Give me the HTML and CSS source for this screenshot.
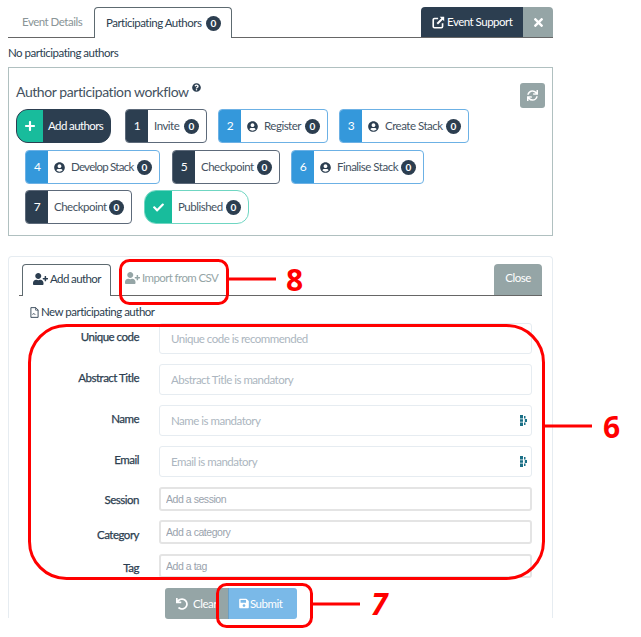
FILE: index.html
```html
<!DOCTYPE html>
<html lang="en">
<head>
<meta charset="utf-8">
<title>Participating Authors</title>
<link rel="stylesheet" href="styles.css">
</head>
<body>
<svg class="defs" width="0" height="0" aria-hidden="true">
  <symbol id="i-user" viewBox="0 0 496 512"><path d="M248 8C111 8 0 119 0 256s111 248 248 248 248-111 248-248S385 8 248 8zm0 96c48.6 0 88 39.4 88 88s-39.4 88-88 88-88-39.4-88-88 39.4-88 88-88zm0 344c-58.7 0-111.3-26.6-146.5-68.2 18.8-35.4 55.6-59.8 98.5-59.8 2.4 0 4.8.4 7.1 1.1 13 4.2 26.6 6.9 40.9 6.9 14.3 0 28-2.7 40.9-6.9 2.3-.7 4.7-1.1 7.1-1.1 42.9 0 79.7 24.4 98.5 59.8C359.3 421.4 306.7 448 248 448z"/></symbol>
  <symbol id="i-check" viewBox="0 0 512 512"><path d="M173.898 439.404l-166.4-166.4c-9.997-9.997-9.997-26.206 0-36.204l36.203-36.204c9.997-9.998 26.207-9.998 36.204 0L192 312.69 432.095 72.596c9.997-9.997 26.207-9.997 36.204 0l36.203 36.204c9.997 9.997 9.997 26.206 0 36.204l-294.4 294.401c-9.998 9.997-26.207 9.997-36.204-.001z"/></symbol>
  <symbol id="i-times" viewBox="0 0 352 512"><path d="M242.72 256l100.07-100.07c12.28-12.28 12.28-32.19 0-44.48l-22.24-22.24c-12.28-12.28-32.19-12.28-44.48 0L176 189.28 75.93 89.21c-12.28-12.28-32.19-12.28-44.48 0L9.21 111.45c-12.28 12.28-12.28 32.19 0 44.48L109.28 256 9.21 356.07c-12.28 12.28-12.28 32.19 0 44.48l22.24 22.24c12.28 12.28 32.2 12.28 44.48 0L176 322.72l100.07 100.07c12.28 12.28 32.2 12.28 44.48 0l22.24-22.24c12.28-12.28 12.28-32.19 0-44.48L242.72 256z"/></symbol>
  <symbol id="i-plus" viewBox="0 0 448 512"><path d="M416 208H272V64c0-17.67-14.33-32-32-32h-32c-17.67 0-32 14.33-32 32v144H32c-17.67 0-32 14.33-32 32v32c0 17.67 14.33 32 32 32h144v144c0 17.67 14.33 32 32 32h32c17.67 0 32-14.33 32-32V304h144c17.67 0 32-14.33 32-32v-32c0-17.67-14.33-32-32-32z"/></symbol>
  <symbol id="i-userplus" viewBox="0 0 640 512"><path d="M624 208h-64v-64c0-8.8-7.2-16-16-16h-32c-8.8 0-16 7.2-16 16v64h-64c-8.8 0-16 7.2-16 16v32c0 8.8 7.2 16 16 16h64v64c0 8.8 7.2 16 16 16h32c8.8 0 16-7.2 16-16v-64h64c8.8 0 16-7.2 16-16v-32c0-8.8-7.2-16-16-16zm-400 48c70.7 0 128-57.3 128-128S294.7 0 224 0 96 57.3 96 128s57.3 128 128 128zm89.6 32h-16.7c-22.2 10.2-46.9 16-72.9 16s-50.6-5.8-72.9-16h-16.7C60.2 288 0 348.2 0 422.4V464c0 26.5 21.5 48 48 48h352c26.5 0 48-21.5 48-48v-41.6c0-74.2-60.2-134.4-134.4-134.4z"/></symbol>
  <symbol id="i-sync" viewBox="0 0 512 512"><path d="M440.65 12.57l4 82.77A247.16 247.16 0 0 0 255.83 8C134.73 8 33.91 94.92 12.29 209.82A12 12 0 0 0 24.09 224h49.05a12 12 0 0 0 11.67-9.26 175.91 175.91 0 0 1 317-56.94l-101.46-4.86a12 12 0 0 0-12.57 12v47.41a12 12 0 0 0 12 12H500a12 12 0 0 0 12-12V12a12 12 0 0 0-12-12h-47.37a12 12 0 0 0-11.98 12.57zM255.83 432a175.61 175.61 0 0 1-146-77.8l101.8 4.87a12 12 0 0 0 12.57-12v-47.4a12 12 0 0 0-12-12H12a12 12 0 0 0-12 12V500a12 12 0 0 0 12 12h47.35a12 12 0 0 0 12-12.6l-4.15-82.57A247.17 247.17 0 0 0 255.83 504c121.11 0 221.93-86.92 243.55-201.82a12 12 0 0 0-11.8-14.18h-49.05a12 12 0 0 0-11.67 9.26A175.86 175.86 0 0 1 255.83 432z"/></symbol>
  <symbol id="i-save" viewBox="0 0 448 512"><path d="M433.941 129.941l-83.882-83.882A48 48 0 0 0 316.118 32H48C21.49 32 0 53.49 0 80v352c0 26.51 21.49 48 48 48h352c26.51 0 48-21.49 48-48V163.882a48 48 0 0 0-14.059-33.941zM224 416c-35.346 0-64-28.654-64-64 0-35.346 28.654-64 64-64s64 28.654 64 64c0 35.346-28.654 64-64 64zm96-304.52V212c0 6.627-5.373 12-12 12H76c-6.627 0-12-5.373-12-12V108c0-6.627 5.373-12 12-12h228.52c3.183 0 6.235 1.264 8.485 3.515l3.48 3.48A11.996 11.996 0 0 1 320 111.48z"/></symbol>
  <symbol id="i-undo" viewBox="0 0 512 512"><path d="M212.333 224.333H12c-6.627 0-12-5.373-12-12V12C0 5.373 5.373 0 12 0h48c6.627 0 12 5.373 12 12v78.112C117.773 39.279 184.26 7.47 258.175 8.007c136.906.994 246.448 111.623 246.157 248.532C504.041 393.258 393.12 504 256.333 504c-64.089 0-122.496-24.313-166.51-64.215-5.099-4.622-5.334-12.554-.467-17.42l33.967-33.967c4.474-4.474 11.662-4.717 16.401-.525C170.76 415.336 211.58 432 256.333 432c97.268 0 176-78.716 176-176 0-97.267-78.716-176-176-176-58.496 0-110.28 28.476-142.274 72.333h98.274c6.627 0 12 5.373 12 12v48c0 6.627-5.373 12-12 12z"/></symbol>
  <symbol id="i-help" viewBox="0 0 512 512"><path d="M504 256c0 136.997-111.043 248-248 248S8 392.997 8 256C8 119.083 119.043 8 256 8s248 111.083 248 248zM262.655 90c-54.497 0-89.255 22.957-116.549 63.758-3.536 5.286-2.353 12.415 2.715 16.258l34.699 26.31c5.205 3.947 12.621 3.008 16.665-2.122 17.864-22.658 30.113-35.797 57.303-35.797 20.429 0 45.698 13.148 45.698 32.958 0 14.976-12.363 22.667-32.534 33.976C247.128 238.528 216 254.941 216 296v4c0 6.627 5.373 12 12 12h56c6.627 0 12-5.373 12-12v-1.333c0-28.462 83.186-29.647 83.186-106.667 0-58.002-60.165-102-116.531-102zM256 338c-25.365 0-46 20.635-46 46 0 25.364 20.635 46 46 46s46-20.636 46-46c0-25.365-20.635-46-46-46z"/></symbol>
  <symbol id="i-ext" viewBox="0 0 16 16"><path d="M7.500 3H3a1.500 1.500 0 0 0-1.500 1.500v8.500A1.500 1.500 0 0 0 3 14.500h8.500A1.500 1.500 0 0 0 13 13V9" fill="none" stroke="currentColor" stroke-width="2"/><path d="M6.500 9.500 13 3" fill="none" stroke="currentColor" stroke-width="2.400"/><path d="M9.500 1h5.500v5.500z"/></symbol>
  <symbol id="i-file" viewBox="0 0 10 12"><path d="M1 .6h5.400L9 3.200v8.200H1z" fill="none" stroke="currentColor"/><path d="M6.200.6v2.800H9M2.800 8.500l1-1.500.8 1.200.8-.8.8.8" fill="none" stroke="currentColor" stroke-width=".8"/></symbol>
  <symbol id="i-pm" viewBox="0 0 7 11"><path d="M0 0h3v3.500H0zM0 4.200h3v2.600H0zM0 7.500h3V11H0zM4 1h1.500v2.500H4zM4.800 4H7v3H4.800zM4 7.500h1.500V10H4z"/></symbol>
</svg>

<main class="page">
  <nav class="tabs">
    <a class="tab">Event Details</a>
    <a class="tab tab-active">Participating Authors <span class="badge">0</span></a>
    <div class="tabs-actions">
      <a class="btn-support"><svg class="ico-ext"><use href="#i-ext"/></svg>Event Support</a>
      <a class="btn-x"><svg class="ico-x"><use href="#i-times"/></svg></a>
    </div>
  </nav>

  <p class="status">No participating authors</p>

  <section class="workflow">
    <div class="wf-head">
      <h2 class="wf-title">Author participation workflow<svg class="ico-help"><use href="#i-help"/></svg></h2>
      <a class="btn-refresh"><svg class="ico-sync"><use href="#i-sync"/></svg></a>
    </div>
    <div class="wf-row">
      <a class="step step-add"><span class="step-num"><svg class="ico-plus"><use href="#i-plus"/></svg></span><span class="step-label">Add authors</span></a>
      <a class="step step-dark s-invite"><span class="step-num">1</span><span class="step-label">Invite <span class="badge">0</span></span></a>
      <a class="step step-blue s-register"><span class="step-num">2</span><span class="step-label"><svg class="ico-user"><use href="#i-user"/></svg>Register <span class="badge">0</span></span></a>
      <a class="step step-blue s-create"><span class="step-num">3</span><span class="step-label"><svg class="ico-user"><use href="#i-user"/></svg>Create Stack <span class="badge">0</span></span></a>
    </div>
    <div class="wf-row wf-indent wf-mid">
      <a class="step step-blue s-develop"><span class="step-num">4</span><span class="step-label"><svg class="ico-user"><use href="#i-user"/></svg>Develop Stack <span class="badge">0</span></span></a>
      <a class="step step-dark s-check5"><span class="step-num">5</span><span class="step-label">Checkpoint <span class="badge">0</span></span></a>
      <a class="step step-blue s-finalise"><span class="step-num">6</span><span class="step-label"><svg class="ico-user"><use href="#i-user"/></svg>Finalise Stack <span class="badge">0</span></span></a>
    </div>
    <div class="wf-row wf-indent">
      <a class="step step-dark s-check7"><span class="step-num">7</span><span class="step-label">Checkpoint <span class="badge">0</span></span></a>
      <a class="step step-done"><span class="step-num"><svg class="ico-check"><use href="#i-check"/></svg></span><span class="step-label">Published <span class="badge">0</span></span></a>
    </div>
  </section>

  <section class="panel">
    <nav class="subtabs">
      <a class="subtab subtab-active"><svg class="ico-up"><use href="#i-userplus"/></svg>Add author</a>
      <a class="subtab"><svg class="ico-up"><use href="#i-userplus"/></svg>Import from CSV</a>
      <a class="btn-close">Close</a>
    </nav>
    <h3 class="form-title"><svg class="ico-file"><use href="#i-file"/></svg>New participating author</h3>
    <form class="form">
      <label class="lbl lbl-a">Unique code</label><div class="field"><input class="input" placeholder="Unique code is recommended"></div>
      <label class="lbl lbl-a">Abstract Title</label><div class="field"><input class="input" placeholder="Abstract Title is mandatory"></div>
      <label class="lbl lbl-a">Name</label><div class="field"><input class="input" placeholder="Name is mandatory"><svg class="ico-pm"><use href="#i-pm"/></svg></div>
      <label class="lbl lbl-a">Email</label><div class="field"><input class="input" placeholder="Email is mandatory"><svg class="ico-pm"><use href="#i-pm"/></svg></div>
      <label class="lbl lbl-b">Session</label><div class="field field-tight"><input class="tag-input" placeholder="Add a session"></div>
      <label class="lbl lbl-c">Category</label><div class="field"><input class="tag-input" placeholder="Add a category"></div>
      <label class="lbl lbl-a">Tag</label><div class="field"><input class="tag-input" placeholder="Add a tag"></div>
    </form>
    <div class="form-actions">
      <a class="btn-clear"><svg class="ico-undo"><use href="#i-undo"/></svg>Clear</a>
      <a class="btn-submit"><svg class="ico-save"><use href="#i-save"/></svg>Submit</a>
    </div>
  </section>
</main>

<svg class="notes" width="641" height="637" viewBox="0 0 641 637">
  <g fill="none" stroke="#f00" stroke-width="3">
    <rect x="120.500" y="260.500" width="107" height="43" rx="9"/>
    <path d="M228 279h48"/>
    <rect x="29.500" y="325.500" width="514" height="253" rx="37"/>
    <path d="M545 426h47"/>
    <rect x="217.500" y="584.500" width="94" height="42" rx="9"/>
    <path d="M312 604h48"/>
  </g>
  <text class="note-num" x="286" y="291">8</text>
  <text class="note-num" x="603" y="438">6</text>
  <text class="note-num note-it" x="371" y="615">7</text>
</svg>
</body>
</html>
```

FILE: styles.css
```css
* { box-sizing: border-box; }
html, body { margin: 0; padding: 0; }
body {
  width: 641px;
  height: 637px;
  overflow: hidden;
  position: relative;
  background: #fff;
  color: #2c3e50;
  font-family: Lato, "Liberation Sans", sans-serif;
  font-size: 11.500px;
  letter-spacing: -.5px;
  line-height: 16px;
}
svg { fill: currentColor; }
.defs { position: absolute; }
.page { width: 545px; margin-left: 8px; padding-top: 7px; }

.badge {
  display: inline-block;
  min-width: 15px;
  height: 15px;
  padding: 0 4px;
  margin-left: 2px;
  border-radius: 8px;
  background: #2c3e50;
  color: #fff;
  font-size: 10px;
  font-weight: 700;
  letter-spacing: 0;
  line-height: 15px;
  text-align: center;
}

.tabs {
  display: flex;
  height: 31px;
  border-bottom: 1px solid #666;
}
.tab {
  width: 86px;
  height: 31px;
  padding: 7px 0 0 14px;
  color: #8a9597;
  white-space: nowrap;
}
.tab-active {
  width: 138px;
  color: #2c3e50;
  background: #fff;
  border: 1px solid #5d6a70;
  border-bottom: 0;
  border-radius: 4px 4px 0 0;
  padding: 7px 0 0 11px;
}
.tabs-actions { display: flex; margin-left: auto; height: 30px; }
.btn-support {
  display: flex;
  align-items: center;
  width: 102px;
  padding-left: 11px;
  background: #2c3e50;
  color: #fff;
  border-radius: 4px 0 0 0;
  white-space: nowrap;
}
.ico-ext { width: 13px; height: 13px; margin-right: 2px; }
.btn-x {
  display: flex;
  align-items: center;
  justify-content: center;
  width: 30px;
  background: #95a5a6;
  color: #fff;
  border-radius: 0 4px 0 0;
}
.ico-x { width: 9px; height: 13px; }

.status { margin: 7px 0 0; height: 22px; }

.workflow {
  height: 169px;
  width: 545px;
  border: 1px solid #b0c0c0;
  padding: 14px 7px 0;
}
.wf-head { display: flex; justify-content: space-between; height: 27px; }
.wf-title {
  margin: 0;
  padding-top: 1px;
  font-size: 14px;
  font-weight: 400;
  letter-spacing: -.42px;
  line-height: 18px;
  color: #44525f;
}
.ico-help { width: 9px; height: 9px; margin-left: 3px; vertical-align: 5px; color: #2c3e50; }
.btn-refresh {
  display: flex;
  align-items: center;
  justify-content: center;
  width: 25px;
  height: 25px;
  margin: 1px 0 0;
  background: #95a5a6;
  color: #fff;
  border-radius: 3px;
}
.ico-sync { width: 11px; height: 11px; }

.wf-row { display: flex; gap: 11px; height: 34px; margin-bottom: 7px; }
.wf-mid { margin-bottom: 6px; }
.wf-indent { padding-left: 9px; }

.step {
  display: flex;
  height: 34px;
  overflow: hidden;
  border: 1px solid;
  border-radius: 4px;
  white-space: nowrap;
  color: #44525f;
}
.step-num {
  display: flex;
  align-items: center;
  justify-content: center;
  flex: none;
  width: 22px;
  color: #fff;
  font-size: 12px;
}
.step-label { display: flex; flex: 1; align-items: center; gap: 2px; padding: 0 7px 0 6px; }
.step-label .badge { margin-left: auto; }
.step-dark { border-color: #5d6a7a; }
.step-dark .step-num { background: #2c3e50; }
.step-blue { border-color: #6cb1e5; }
.step-blue .step-num { background: #3498db; }
.ico-user { flex: none; width: 11px; height: 11px; margin-right: 4px; color: #2c3e50; }

.s-invite { width: 82px; margin-left: 3px; }
.s-register { width: 110px; }
.s-create { width: 130px; }
.s-develop { width: 135px; letter-spacing: -.75px; }
.s-check5 { width: 108px; margin-left: 1px; }
.s-finalise { width: 133px; }
.s-check7 { width: 107px; }

.step-add {
  width: 95px;
  background: #2c3e50;
  border-color: #2c3e50;
  border-radius: 12px;
  color: #fff;
}
.step-add .step-num { width: 26px; background: #18bc9c; }
.step-add .step-label { padding: 0 0 0 5px; letter-spacing: -.6px; }
.ico-plus { width: 10px; height: 12px; }

.step-done { width: 105px; margin-left: 1px; border-color: #6fd6c2; border-radius: 12px; }
.step-done .step-num { width: 27px; background: #18bc9c; }
.ico-check { width: 11px; height: 11px; }

.panel {
  width: 545px;
  height: 362px;
  margin-top: 20px;
  padding: 7px 10px 0;
  border: 1px solid #e6ecf1;
  border-bottom: 0;
  border-radius: 4px 4px 0 0;
}
.subtabs {
  display: flex;
  height: 32px;
  border-bottom: 1px solid #666;
}
.subtab {
  display: flex;
  align-items: center;
  height: 31px;
  padding: 0 0 3px 10px;
  margin-left: 3px;
  color: #95a5a6;
  letter-spacing: -.6px;
  white-space: nowrap;
}
.subtab-active {
  width: 89px;
  height: 32px;
  color: #2c3e50;
  background: #fff;
  border: 1px solid #5d6a70;
  border-bottom: 0;
  border-radius: 4px 4px 0 0;
  margin-right: 1px;
}
.ico-up { flex: none; width: 15px; height: 12px; margin-right: 2px; }
.btn-close {
  display: flex;
  align-items: center;
  justify-content: center;
  width: 48px;
  height: 31px;
  padding-bottom: 3px;
  margin-left: auto;
  background: #95a5a6;
  color: #fff;
  border-radius: 4px 4px 0 0;
}

.form-title {
  display: flex;
  align-items: center;
  margin: 8px 0 0 10px;
  height: 16px;
  font-size: 11.500px;
  font-weight: 400;
}
.ico-file { width: 9px; height: 11px; margin: 0 2px 0 1px; }

.form {
  display: grid;
  grid-template-columns: 120px 373px;
  column-gap: 20px;
  margin-top: 3px;
}
.lbl {
  text-align: right;
  letter-spacing: -.5px;
  line-height: 16px;
  -webkit-text-stroke: .25px #2c3e50;
}
.lbl-a { padding-top: 6px; }
.lbl-b { padding-top: 5px; }
.lbl-c { padding-top: 7px; }
.field { position: relative; margin-bottom: 10px; }
.field-tight { margin-bottom: 9px; }
.input {
  display: block;
  width: 100%;
  height: 31px;
  padding: 0 11px;
  border: 1px solid #e6ecf1;
  border-radius: 3px;
  background: #fff;
  font: 11.500px Lato, "Liberation Sans", sans-serif;
  letter-spacing: -.5px;
  color: #2c3e50;
  outline: 0;
}
.input::placeholder { color: #acb6c0; opacity: 1; }
.tag-input {
  display: block;
  width: 100%;
  height: 24px;
  padding: 0 5px;
  border: 2px solid #e4e4e4;
  border-radius: 3px;
  background: #fff;
  font: 10.500px "Liberation Sans", Arial, sans-serif;
  letter-spacing: -.45px;
  outline: 0;
}
.tag-input::placeholder { color: #9aa3ad; opacity: 1; }
.ico-pm {
  position: absolute;
  top: 10px;
  right: 5px;
  width: 7px;
  height: 11px;
  color: #1a6f86;
}

.form-actions { display: flex; margin-left: 146px; }
.btn-clear, .btn-submit {
  display: flex;
  align-items: center;
  height: 31px;
  color: #fff;
  white-space: nowrap;
}
.btn-clear {
  width: 63px;
  padding-left: 11px;
  background: #95a5a6;
  border-radius: 3px 0 0 3px;
  overflow: hidden;
}
.ico-undo { flex: none; width: 12px; height: 12px; margin-right: 5px; }
.btn-submit {
  width: 69px;
  padding-left: 10px;
  background: #7ab9e8;
  border-left: 1px solid #6a9fc5;
  border-radius: 0 3px 3px 0;
}
.ico-save { width: 10px; height: 11px; margin-right: 1px; }

.notes { position: absolute; left: 0; top: 0; pointer-events: none; }
.note-num {
  fill: #f00;
  font-family: "Open Sans", "Liberation Sans", sans-serif;
  font-size: 30px;
  font-weight: 700;
  letter-spacing: 0;
}
.note-it { font-style: italic; }
```
